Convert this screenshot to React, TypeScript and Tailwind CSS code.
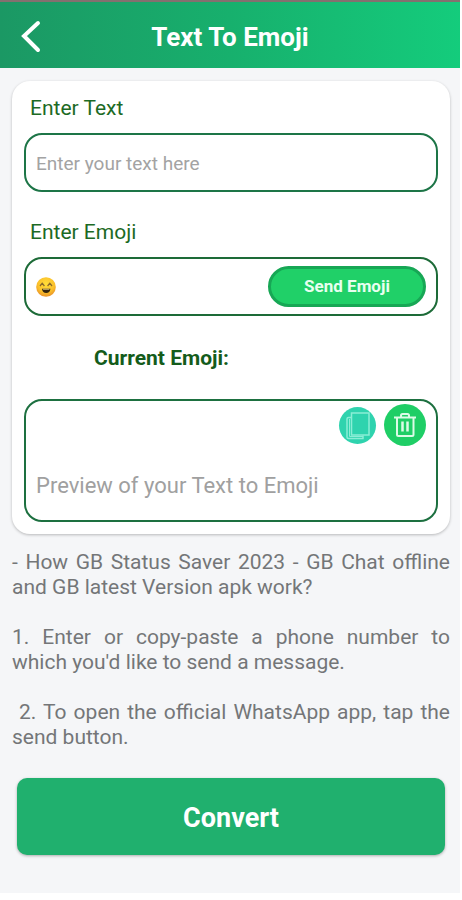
import type { ReactNode } from "react";

const help = [
  "- How GB Status Saver 2023 - GB Chat offline and GB latest Version apk work?",
  "1. Enter or copy-paste a phone number to which you'd like to send a message.",
  "\u00a02. To open the official WhatsApp app, tap the send button.",
];

function FieldLabel({ htmlFor, children }: { htmlFor: string; children: ReactNode }) {
  return (
    <label htmlFor={htmlFor} className="block pt-px pb-[7px] pl-[6px] text-[21px] leading-9 text-[#1c6a24]">
      {children}
    </label>
  );
}

function GrinEmoji() {
  return (
    <svg viewBox="0 0 20 20" className="h-5 w-5 shrink-0" role="img" aria-label="Grinning face">
      <defs>
        <radialGradient id="face" cx="50%" cy="35%" r="65%">
          <stop offset="0" stopColor="#ffdf3a" />
          <stop offset="0.65" stopColor="#fbc02a" />
          <stop offset="1" stopColor="#e8912a" />
        </radialGradient>
      </defs>
      <circle cx="10" cy="10" r="9.8" fill="url(#face)" />
      <path d="M4 9 6.2 6.2 8.4 9M11.6 9l2.2-2.8L16 9" fill="none" stroke="#8a6a2c" strokeWidth="1.3" />
      <path d="M6 11.8h8.400c-.2 2.900-1.900 4.200-4.200 4.200S6.200 14.700 6 11.800Z" fill="#33240c" />
      <path d="M6.800 11.800h6.800l-.4 1H7.200Z" fill="#d9c27a" />
    </svg>
  );
}

function CopyIcon() {
  return (
    <svg viewBox="0 0 37 37" className="h-full w-full" fill="none" stroke="#8beed6" strokeWidth="1.5" aria-hidden="true">
      <path d="M12.5 6H30v22H12.5z" />
      <path d="M12 10.5H9.500Q8 10.500 8 12v18q0 1.500 1.500 1.500H24v-3" />
      <path d="M10.500 12v17.500H24" strokeWidth="1" />
    </svg>
  );
}

function TrashIcon() {
  return (
    <svg viewBox="0 0 42 42" className="h-full w-full" fill="none" stroke="#dcfbe6" strokeWidth="2" aria-hidden="true">
      <path d="M10 13.500h22M13 13.500V30.500q0 1.500 1.500 1.500h13.500q1.500 0 1.500-1.500V13.500M17 13v-1.500q0-1.500 1.500-1.500h5q1.500 0 1.500 1.500V13" />
      <path d="M18.500 17.500v10M23.500 17.500v10" strokeWidth="2.500" />
    </svg>
  );
}

export default function App() {
  return (
    <div className="mr-[2px] bg-[#f5f6f8] pb-[38px] font-['Roboto',sans-serif]">
      <header className="grid h-[68px] grid-cols-[60px_1fr_60px] items-center border-t-2 border-[#84706f] bg-linear-to-r from-[#1b9864] via-[#17b06d] to-[#14cc7c] pt-1">
        <button type="button" aria-label="Back" className="flex h-full items-center pl-5">
          <svg viewBox="0 0 22 34" className="h-[34px] w-[22px]" fill="none" stroke="white" strokeWidth="4" strokeLinecap="round" aria-hidden="true">
            <path d="M18 3 4 16l14 14" />
          </svg>
        </button>
        <h1 className="text-center text-[26px] leading-8 font-bold text-white">Text To Emoji</h1>
      </header>

      <main className="pt-[13px] pr-[10px] pl-3">
        <form>
          <section className="rounded-[18px] bg-white px-3 pt-2 pb-3 shadow-[0_1px_3px_rgba(0,0,0,0.25)]">
            <FieldLabel htmlFor="text">Enter Text</FieldLabel>
            <input
              id="text"
              placeholder="Enter your text here"
              className="block h-[59px] w-full rounded-[18px] border-2 border-[#1d7547] px-[10px] pt-px text-[19px] text-gray-700 outline-none placeholder:text-[#a3a3a3]"
            />

            <div className="mt-[21px]">
              <FieldLabel htmlFor="emoji">Enter Emoji</FieldLabel>
              <div className="flex h-[59px] items-center rounded-[18px] border-2 border-[#1d6b38] px-[10px]">
                <GrinEmoji />
                <input id="emoji" className="min-w-0 flex-1 pl-1 text-[19px] outline-none" />
                <button
                  type="button"
                  className="h-[41px] w-[158px] rounded-full border-[3px] border-[#17a755] bg-[#20d068] text-[17px] font-bold text-[#e8fff0]"
                >
                  Send Emoji
                </button>
              </div>
            </div>

            <label htmlFor="preview" className="mt-6 mb-[23px] block pl-[70px] text-[21px] leading-9 font-bold text-[#145c1b]">
              Current Emoji:
            </label>
            <div className="h-[123px] rounded-[18px] border-2 border-[#1d7040] px-[10px] pt-[3px]">
              <div className="flex items-center justify-end gap-2">
                <button type="button" aria-label="Copy" className="h-[37px] w-[37px] rounded-full bg-[#2fd3ae]">
                  <CopyIcon />
                </button>
                <button type="button" aria-label="Delete" className="h-[42px] w-[42px] rounded-full bg-[#1fce66]">
                  <TrashIcon />
                </button>
              </div>
              <textarea
                id="preview"
                rows={1}
                placeholder="Preview of your Text to Emoji"
                className="mt-6 block w-full resize-none text-[22px] leading-8 text-gray-700 outline-none placeholder:text-[#a0a0a0]"
              />
            </div>
          </section>

          <div className="mt-4 space-y-[25px] text-justify text-[21px] leading-[25px] text-[#747678]">
            {help.map((line) => (
              <p key={line}>{line}</p>
            ))}
          </div>

          <div className="mt-7 px-[5px]">
            <button
              type="button"
              className="h-[77px] w-full rounded-[10px] bg-[#20b06e] pt-[3px] text-[27px] font-bold text-white shadow-[0_1px_3px_rgba(0,0,0,0.3)]"
            >
              Convert
            </button>
          </div>
        </form>
      </main>
    </div>
  );
}
